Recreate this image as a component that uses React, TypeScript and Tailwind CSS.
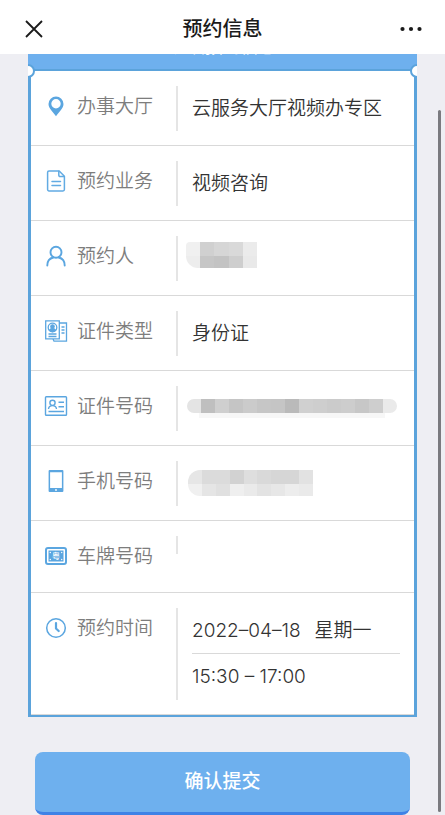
import type { ReactNode } from "react"

const idCells = [
  "bg-[#e4e4e4] w-3 rounded-l-lg",
  "bg-[#bfbfbf]",
  "bg-[#cfcfcf]",
  "bg-[#c5c5c5]",
  "bg-[#cbcbcb]",
  "bg-[#c6c6c6]",
  "bg-[#c5c5c5]",
  "bg-[#bababa]",
  "bg-[#d0d0d0]",
  "bg-[#cecece]",
  "bg-[#cbcbcb]",
  "bg-[#cdcdcd]",
  "bg-[#c7c7c7]",
  "bg-[#cecece]",
  "bg-[#eaeaea] w-3 rounded-r-lg",
]

const phoneTop = [
  "bg-[#e6e6e6] rounded-tl-xl",
  "bg-[#dbdbdb]",
  "bg-[#dbdbdb]",
  "bg-[#d2d2d2]",
  "bg-[#dedede]",
  "bg-[#d9d9d9]",
  "bg-[#d6d6d6]",
  "bg-[#d6d6d6]",
  "bg-[#e2e2e2]",
]

const phoneBottom = [
  "bg-[#f0f0f0] rounded-bl-xl",
  "bg-[#e5e5e5]",
  "bg-[#e0e0e0]",
  "bg-[#efefef]",
  "bg-[#eaeaea]",
  "bg-[#e3e3e3]",
  "bg-[#e7e7e7]",
  "bg-[#ededed]",
  "bg-[#eaeaea]",
]

const nameTop = ["bg-[#f0f0f0] rounded-tl-sm", "bg-[#d0d0d0]", "bg-[#d6d6d6]", "bg-[#d9d9d9]", "bg-[#ebebeb]"]
const nameBottom = ["bg-[#ededed] rounded-bl-xl", "bg-[#c6c6c6]", "bg-[#c3c3c3]", "bg-[#cecece]", "bg-[#e9e9e9]"]

function MosaicRow({ cells, height }: { cells: string[]; height: string }) {
  return (
    <div className={`flex ${height}`}>
      {cells.map((cell, i) => (
        <span key={i} className={`min-w-3 flex-1 ${cell}`} />
      ))}
    </div>
  )
}

function PinIcon() {
  return (
    <svg viewBox="0 0 24 24" className="h-6 w-6" fill="#5ba6e0">
      <path
        fillRule="evenodd"
        d="M12 2.500a7.500 7.500 0 0 0-7.500 7.500c0 4.600 4.800 8.200 7.500 12.300 2.700-4.100 7.500-7.700 7.500-12.300A7.500 7.500 0 0 0 12 2.500zm0 2.600a4.700 4.700 0 1 1 0 9.400 4.700 4.700 0 0 1 0-9.400z"
      />
    </svg>
  )
}

function DocIcon() {
  return (
    <svg viewBox="0 0 24 24" className="h-6 w-6" fill="none" stroke="#62abe3" strokeWidth="1.500" strokeLinejoin="round" strokeLinecap="round">
      <path d="M15.200 2H5a1.400 1.400 0 0 0-1.400 1.400v17.200A1.400 1.400 0 0 0 5 22h14a1.400 1.400 0 0 0 1.400-1.400V7.200z" />
      <path d="M14.800 2.300v4a1.200 1.200 0 0 0 1.200 1.200h4M8 12.500h8.500M8 16.500h8.500" />
    </svg>
  )
}

function PersonIcon() {
  return (
    <svg viewBox="0 0 24 24" className="h-6 w-6" fill="none" stroke="#5ba6e0" strokeWidth="1.900" strokeLinecap="round">
      <circle cx="12" cy="8.300" r="5.500" />
      <path d="M3.300 21.500c0-4.400 2.400-7.200 6-8M20.700 21.500c0-4.400-2.400-7.200-6-8" />
    </svg>
  )
}

function CertIcon() {
  return (
    <svg viewBox="0 0 24 24" className="h-6 w-6" fill="none" stroke="#5ba6e0" strokeWidth="1.300">
      <path d="M1.700 1.800h13.600v18H1.700zM15.300 4h7.200v18.200H10l-1-2.200" />
      <circle cx="8.500" cy="8.500" r="4.300" />
      <circle cx="8.500" cy="7.500" r="1.700" fill="#5ba6e0" />
      <path d="M5.500 11.300c.6-1.400 1.800-1.700 3-1.700s2.400.3 3 1.700c-1.600 1.600-4.400 1.600-6 0z" fill="#5ba6e0" />
      <path d="M4.500 15h8M4.500 17.500h8M17.500 8h3M17.500 11h3M17.500 14h3" />
    </svg>
  )
}

function IdCardIcon() {
  return (
    <svg viewBox="0 0 24 24" className="h-6 w-6" fill="none" stroke="#5ba6e0" strokeWidth="1.400">
      <rect x="1.500" y="2.700" width="21" height="18.500" rx="0.800" />
      <circle cx="8.500" cy="8.800" r="2.600" />
      <path d="M4.500 15c.2-2.200 1.500-3.400 4-3.400s3.800 1.200 4 3.400M14.500 8.300h5.500M14.500 12.800h5.500M4.500 17.500H20" />
    </svg>
  )
}

function PhoneIcon() {
  return (
    <svg viewBox="0 0 24 24" className="h-6 w-6">
      <path
        fill="#5ba6e0"
        fillRule="evenodd"
        d="M5.600 1h12.800a1 1 0 0 1 1 1v20a1 1 0 0 1-1 1H5.600a1 1 0 0 1-1-1V2a1 1 0 0 1 1-1zM6.100 3.200v15.800h11.800V3.200z"
      />
      <circle cx="12" cy="21" r="0.900" fill="#fff" />
    </svg>
  )
}

function PlateIcon() {
  return (
    <span className="relative flex h-6 w-6 items-center justify-center">
      <svg viewBox="0 0 24 24" className="h-6 w-6" fill="none">
        <rect x="2" y="4" width="20" height="16" rx="2" stroke="#5ba6e0" strokeWidth="2" />
        <rect x="4.500" y="6.500" width="15" height="11" fill="#5ba6e0" />
        <g fill="#fff">
          <circle cx="6.300" cy="8.500" r="0.700" />
          <circle cx="17.700" cy="8.500" r="0.700" />
          <circle cx="6.300" cy="15.500" r="0.700" />
          <circle cx="17.700" cy="15.500" r="0.700" />
        </g>
      </svg>
      <span className="absolute inset-0 flex items-center justify-center text-[8px] leading-none font-medium text-white">粤</span>
    </span>
  )
}

function ClockIcon() {
  return (
    <svg viewBox="0 0 24 24" className="h-6 w-6" fill="none" stroke="#5ba6e0" strokeLinecap="round" strokeLinejoin="round">
      <circle cx="12" cy="12" r="9.300" strokeWidth="1.500" />
      <path d="M12 7v5.500l2.700 2.500" strokeWidth="2.200" />
    </svg>
  )
}

type RowProps = {
  icon: ReactNode
  label: string
  short?: boolean
  children?: ReactNode
}

function Row({ icon, label, short, children }: RowProps) {
  return (
    <div className="flex border-b border-[#d9d9d9] pt-[15px] pb-[14px]">
      <dt className="flex h-[42px] w-[145px] shrink-0 items-center gap-[9px] pb-[2px] pl-[13px] text-[#7d7d7d]">
        {icon}
        <span className="pt-[2px]">{label}</span>
      </dt>
      <dd className={`min-w-0 flex-1 border-l-2 border-[#e5e5e5] ${short ? "h-[18px]" : "min-h-[45px]"}`}>{children}</dd>
    </div>
  )
}

export default function App() {
  return (
    <div className="relative min-h-screen bg-[#eeeef3] font-['Inter','Noto_Sans_CJK_SC',sans-serif] text-[19px] font-[350] text-[#333]">
      <header className="flex h-[54px] items-center justify-between bg-white px-[22px] pt-[3px] text-[#1a1a1a]">
        <button type="button" aria-label="关闭" className="flex w-6 justify-center">
          <svg viewBox="0 0 24 24" className="h-6 w-6" fill="none" stroke="currentColor" strokeWidth="1.800">
            <path d="M4 4l16 16M20 4L4 20" />
          </svg>
        </button>
        <h1 className="text-[20px] font-medium">预约信息</h1>
        <button type="button" aria-label="更多" className="flex w-6 justify-center">
          <svg viewBox="0 0 24 24" className="h-6 w-6" fill="currentColor">
            <circle cx="3.500" cy="12" r="2.100" />
            <circle cx="12" cy="12" r="2.100" />
            <circle cx="20.500" cy="12" r="2.100" />
          </svg>
        </button>
      </header>

      <main className="px-7">
        <section className="relative overflow-hidden">
          <div className="flex h-[17px] flex-col items-center justify-end overflow-hidden border-b-2 border-[#5ba3db] bg-[#6eb0ee]">
            <h2 className="shrink-0 pb-[10px] text-[18px] leading-6 text-white">确认预约信息</h2>
          </div>
          <span className="absolute top-[10px] -left-[7px] h-[14px] w-[14px] rounded-full border-2 border-[#5ba3db] bg-white" />
          <span className="absolute top-[10px] -right-[7px] h-[14px] w-[14px] rounded-full border-2 border-[#5ba3db] bg-white" />

          <dl className="border-x-3 border-b-2 border-[#5ba3db] bg-white">
            <Row icon={<PinIcon />} label="办事大厅">
              <p className="pl-[14px] leading-[45px]">云服务大厅视频办专区</p>
            </Row>
            <Row icon={<DocIcon />} label="预约业务">
              <p className="pl-[14px] leading-[45px]">视频咨询</p>
            </Row>
            <Row icon={<PersonIcon />} label="预约人">
              <div className="ml-2 w-[71px] pt-[6px]">
                <MosaicRow cells={nameTop} height="h-[14px]" />
                <MosaicRow cells={nameBottom} height="h-3" />
              </div>
            </Row>
            <Row icon={<CertIcon />} label="证件类型">
              <p className="pl-[14px] leading-[45px]">身份证</p>
            </Row>
            <Row icon={<IdCardIcon />} label="证件号码">
              <div className="ml-[9px] w-[210px] pt-[13px]">
                <MosaicRow cells={idCells} height="h-[14px]" />
                <div className="mx-3 h-[5px] bg-[#f7f7f7]" />
              </div>
            </Row>
            <Row icon={<PhoneIcon />} label="手机号码">
              <div className="ml-[10px] w-[125px] pt-[9px]">
                <MosaicRow cells={phoneTop} height="h-[14px]" />
                <MosaicRow cells={phoneBottom} height="h-3" />
              </div>
            </Row>
            <Row icon={<PlateIcon />} label="车牌号码" short />
            <Row icon={<ClockIcon />} label="预约时间">
              <div className="mx-[14px]">
                <p className="flex gap-[14px] border-b border-[#d9d9d9] leading-[45px]">
                  <span>2022–04–18</span>
                  <span>星期一</span>
                </p>
                <p className="leading-[46px]">15:30 – 17:00</p>
              </div>
            </Row>
          </dl>
        </section>

        <button
          type="button"
          className="mx-[7px] mt-[35px] flex h-[63px] w-[calc(100%-14px)] items-center justify-center rounded-lg border-b-3 border-[#3f82e6] bg-[#6eb0ee] font-medium text-white"
        >
          确认提交
        </button>
      </main>

      <div className="absolute top-[110px] right-1 bottom-[3px] w-[3px] rounded-full bg-[#7a7a7f]" />
    </div>
  )
}
